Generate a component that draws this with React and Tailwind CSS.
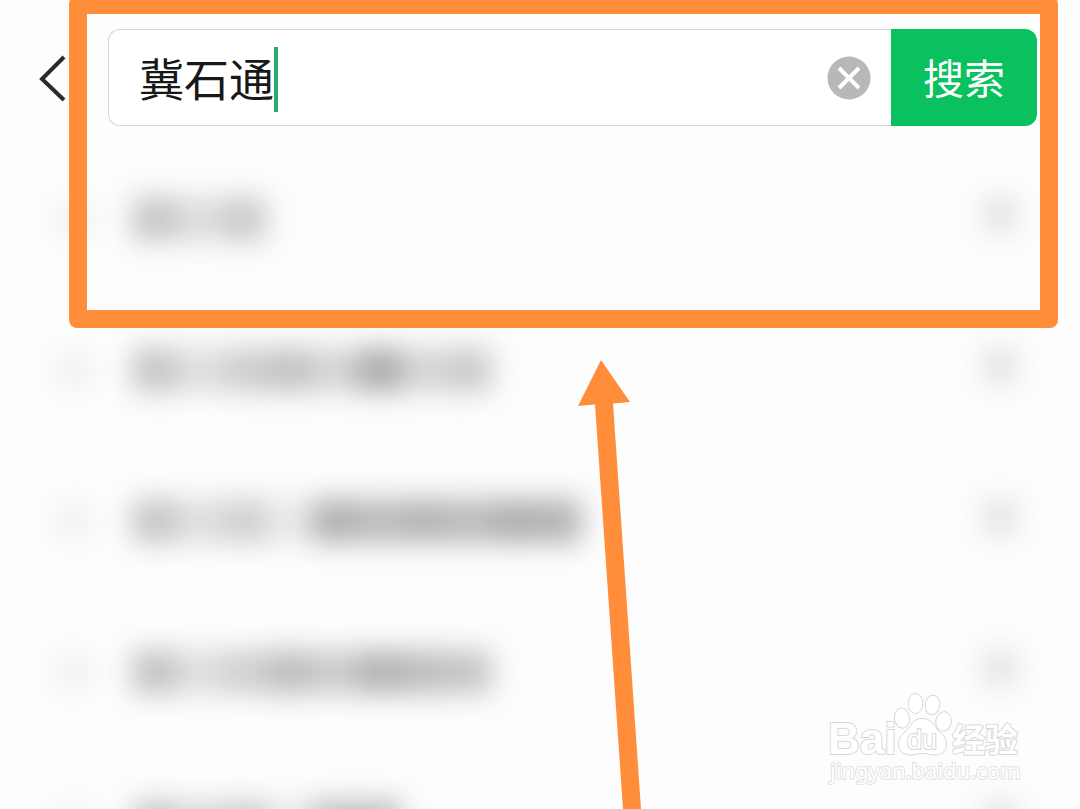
import { useState } from "react";

// Strength of each smudged glyph, in percent of black.
const suggestions = [
  [22, 13, 20],
  [22, 12, 19, 23, 16, 32, 16, 20],
  [22, 12, 18, 8, 30, 26, 29, 26, 31, 29],
  [23, 12, 18, 25, 20, 29, 25, 22],
  [22, 14, 20, 8, 26, 26],
];

function Smudge({ strength }) {
  return (
    <span
      className="block h-11 w-[45px] bg-black"
      style={{ opacity: strength / 100 }}
    />
  );
}

function SuggestionRow({ glyphs }) {
  return (
    <li className="flex h-[151px] items-center pr-[60px] pl-14">
      <span className="h-9 w-9 rounded-full bg-black/6 blur-[14px]" />
      <span className="ml-10 flex flex-1 blur-[14px]">
        {glyphs.map((strength, i) => (
          <Smudge key={i} strength={strength} />
        ))}
      </span>
      <span className="mb-2 h-10 w-10 rounded-full bg-black/10 blur-[14px]" />
    </li>
  );
}

function Watermark() {
  return (
    <svg
      className="absolute right-[54px] bottom-5 h-[100px] w-[200px]"
      viewBox="0 0 200 100"
      fill="#ffffff"
      stroke="#d8d8d8"
      strokeWidth="1"
      strokeLinejoin="round"
      aria-label="Baidu 经验"
    >
      <g style={{ paintOrder: "stroke" }} strokeWidth="2">
        <text x="2" y="65" fontSize="44" fontWeight="700" fontFamily="'Liberation Sans', sans-serif">
          Bai
        </text>
        <text
          x="126"
          y="63"
          fontSize="33"
          fontWeight="700"
          fontFamily="'Noto Sans CJK SC', sans-serif"
        >
          经验
        </text>
      </g>
      <text
        x="4"
        y="90"
        fontSize="22"
        strokeWidth="2"
        stroke="#e2e2e2"
        style={{ paintOrder: "stroke" }}
        fontFamily="'Noto Sans', sans-serif"
      >
        jingyan.baidu.com
      </text>
      <ellipse cx="76" cy="29" rx="7.500" ry="10" transform="rotate(-6 76 29)" />
      <ellipse cx="89.500" cy="14.500" rx="7.300" ry="10" />
      <ellipse cx="106.500" cy="16" rx="7.300" ry="9.800" transform="rotate(8 106.500 16)" />
      <ellipse cx="117.500" cy="32.500" rx="7.800" ry="9.800" transform="rotate(8 117.500 32.500)" />
      <path d="M96 29.500c-7 0-10 4-13 9-3.500 5-10.500 8-10.500 16.500C72.500 62 78 66 84 66c5 0 7-1.500 12-1.500s8 1.500 13 1.500c7 0 12-4 11.500-12-.500-8-7-10-10.500-15.500-3-5-7-9-14-9Z" />
      <text
        x="81"
        y="60"
        fontSize="27"
        strokeWidth="2"
        style={{ paintOrder: "stroke" }}
        fontFamily="'Liberation Sans', sans-serif"
      >
        du
      </text>
    </svg>
  );
}

export default function App() {
  const [query, setQuery] = useState("冀石通");

  return (
    <main className="relative h-screen overflow-hidden bg-[#fdfdfd] font-['Noto_Sans_CJK_SC',sans-serif]">
      <form
        className="flex items-center pt-[29px] pr-[43px] pl-9"
        onSubmit={(e) => e.preventDefault()}
      >
        <button type="button" aria-label="返回" className="w-[72px]">
          <svg className="h-12 w-8" viewBox="0 0 32 48" fill="none" stroke="#2b2b2b" strokeWidth="4">
            <path d="M28 3 6 25 28 46" />
          </svg>
        </button>
        <div className="flex h-[97px] min-w-0 flex-1 items-center rounded-l-xl border border-r-0 border-[#d5d5d5] bg-white pr-5 pl-[30px]">
          <div className="flex items-center pt-1">
            <input
              type="text"
              aria-label="搜索内容"
              value={query}
              onChange={(e) => setQuery(e.target.value)}
              className="field-sizing-content h-16 pb-1 text-[45px] leading-[60px] text-[#181818] caret-transparent outline-none"
            />
            <span className="h-[65px] w-1 bg-[#2aae67]" />
          </div>
          <button
            type="button"
            aria-label="清除"
            onClick={() => setQuery("")}
            className="ml-auto h-11 w-11"
          >
            <svg className="h-11 w-11" viewBox="0 0 44 44">
              <circle cx="22" cy="22" r="21.500" fill="#b8b8b8" />
              <path d="m12 12 20 20M32 12 12 32" stroke="#ffffff" strokeWidth="4" />
            </svg>
          </button>
        </div>
        <button
          type="submit"
          className="h-[97px] w-[146px] rounded-r-xl bg-[#0ac160] pb-[2px] text-[41px] text-white"
        >
          搜索
        </button>
      </form>

      <ul className="mt-[17px]" aria-hidden="true">
        {suggestions.map((glyphs, i) => (
          <SuggestionRow key={i} glyphs={glyphs} />
        ))}
      </ul>

      <Watermark />

      <div className="pointer-events-none absolute -top-1 right-[22px] left-[69px] h-[332px] rounded-lg border-[18px] border-[#ff8d3a]" />
      <svg
        className="pointer-events-none absolute top-[360px] left-[578px] h-[449px] w-16"
        viewBox="0 0 64 449"
        fill="#ff8d3a"
      >
        <path d="M23 0 52 42 35 43.500 63 449H45L17 44.500 0 46Z" />
      </svg>
    </main>
  );
}
